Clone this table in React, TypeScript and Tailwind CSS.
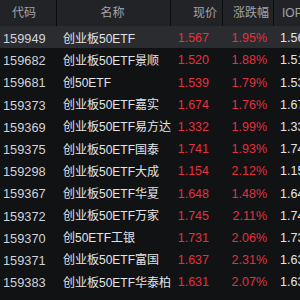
import React from "react";

const rows = [
  ["159949", "创业板50ETF", "1.567", "1.95%", "1.5676"],
  ["159682", "创业板50ETF景顺", "1.520", "1.88%", "1.5198"],
  ["159681", "创50ETF", "1.539", "1.79%", "1.5385"],
  ["159373", "创业板50ETF嘉实", "1.674", "1.76%", "1.6741"],
  ["159369", "创业板50ETF易方达", "1.332", "1.99%", "1.3320"],
  ["159375", "创业板50ETF国泰", "1.741", "1.93%", "1.7405"],
  ["159298", "创业板50ETF大成", "1.154", "2.12%", "1.1541"],
  ["159367", "创业板50ETF华夏", "1.648", "1.48%", "1.6479"],
  ["159372", "创业板50ETF万家", "1.745", "2.11%", "1.7446"],
  ["159370", "创50ETF工银", "1.731", "2.06%", "1.7308"],
  ["159371", "创业板50ETF富国", "1.637", "2.31%", "1.6370"],
  ["159383", "创业板50ETF华泰柏", "1.631", "2.07%", "1.6314"],
];

export default function App() {
  return (
    <div
      className="w-[300px] h-[300px] overflow-hidden bg-[#111214]"
      style={{ fontFamily: '"Liberation Sans", "Noto Sans CJK SC", sans-serif' }}
    >
      <div className="flex h-[26px] bg-[#222327] text-[12px] text-[#a2a3a8] items-stretch">
        <div className="w-[57px] shrink-0 flex items-center justify-center pr-[8px] border-r border-[#0c0c0e]">代码</div>
        <div className="w-[114px] shrink-0 flex items-center justify-center pr-[2px] border-r border-[#0c0c0e]">名称</div>
        <div className="w-[52px] shrink-0 flex items-center justify-end pr-[5px] border-r border-[#0c0c0e]">现价</div>
        <div className="w-[51px] shrink-0 flex items-center justify-end pr-[4px] border-r border-[#0c0c0e]">涨跌幅</div>
        <div className="w-[60px] shrink-0 flex items-center pl-[8px] whitespace-nowrap">IOPV</div>
      </div>
      {rows.map((r, i) => (
        <div
          key={r[0]}
          className={`flex h-[22.2px] items-center whitespace-nowrap ${i === 0 ? "bg-[#2b2c30]" : ""}`}
        >
          <div className="w-[57px] shrink-0 pl-[3px] text-[12.8px] text-[#cfd3dc] pt-[3px]">{r[0]}</div>
          <div className="w-[114px] shrink-0 pl-[6px] text-[12px] text-[#e4e4e6] overflow-hidden pt-[3px]">{r[1]}</div>
          <div className="w-[52px] shrink-0 text-right pr-[14px] text-[12.5px] text-[#e3313d] pt-[3px]">{r[2]}</div>
          <div className="w-[51px] shrink-0 text-right pr-[7px] text-[12.5px] text-[#e3313d] pt-[3px]">{r[3]}</div>
          <div className="w-[60px] shrink-0 pl-[6px] text-[12.5px] text-[#e4e4e6] pt-[3px]">{r[4]}</div>
        </div>
      ))}
    </div>
  );
}
